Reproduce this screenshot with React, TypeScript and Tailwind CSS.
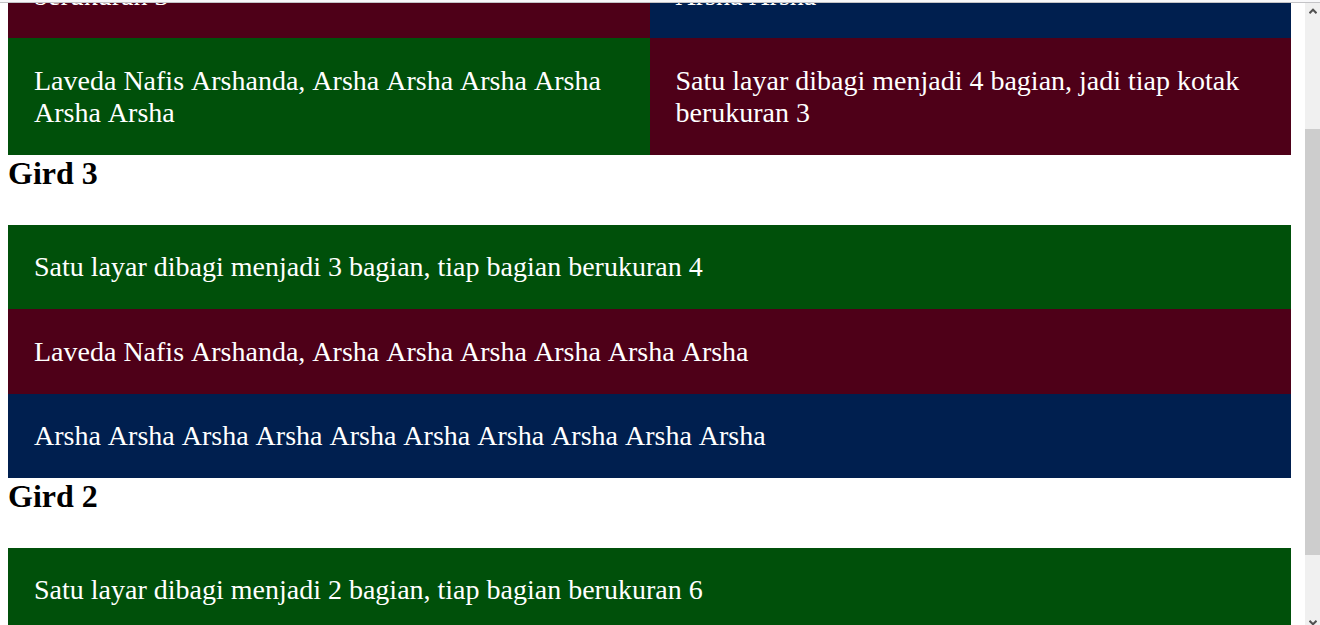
import type { ReactNode } from "react";

const tones = {
  green: "bg-[#00500a]",
  maroon: "bg-[#4e0018]",
  navy: "bg-[#001f4f]",
};

type Cell = { tone: keyof typeof tones; text: string };

const quarters: Cell[] = [
  { tone: "maroon", text: "Satu layar dibagi menjadi 4 bagian, jadi tiap kotak berukuran 3" },
  { tone: "navy", text: "Arsha Arsha Arsha Arsha Arsha Arsha Arsha Arsha Arsha Arsha" },
  { tone: "green", text: "Laveda Nafis Arshanda, Arsha Arsha Arsha Arsha Arsha Arsha" },
  { tone: "maroon", text: "Satu layar dibagi menjadi 4 bagian, jadi tiap kotak berukuran 3" },
];

const thirds: Cell[] = [
  { tone: "green", text: "Satu layar dibagi menjadi 3 bagian, tiap bagian berukuran 4" },
  { tone: "maroon", text: "Laveda Nafis Arshanda, Arsha Arsha Arsha Arsha Arsha Arsha" },
  { tone: "navy", text: "Arsha Arsha Arsha Arsha Arsha Arsha Arsha Arsha Arsha Arsha" },
];

const halves: Cell[] = [
  { tone: "green", text: "Satu layar dibagi menjadi 2 bagian, tiap bagian berukuran 6" },
];

function Block({ tone, text }: Cell) {
  return (
    <div className={`${tones[tone]} flex items-end p-[26px] text-[28px] leading-8 text-white`}>
      <p>{text}</p>
    </div>
  );
}

function Heading({ children }: { children: ReactNode }) {
  return <h1 className="pb-[33px] text-[32px] leading-[37px] font-bold text-black">{children}</h1>;
}

function Chevron({ down = false }: { down?: boolean }) {
  return (
    <svg viewBox="0 0 8 6" className="h-[6px] w-[8px]" fill="none" stroke="#505050" strokeWidth="2">
      <path d={down ? "M0.5 0.8 4 4.3 7.5 0.8" : "M0.5 5.2 4 1.7 7.5 5.2"} />
    </svg>
  );
}

export default function App() {
  return (
    <div className="flex h-screen flex-col overflow-hidden bg-white font-['Liberation_Serif','Times_New_Roman',serif] [font-kerning:none]">
      <div className="h-[3px] shrink-0 border-b border-[#c3c3c6] bg-[#f8f8fa]" />
      <div className="flex min-h-0 flex-1">
        <main className="flex min-w-0 flex-1 flex-col overflow-hidden pr-[14px] pl-2">
          <section className="-mt-[82px] grid shrink-0 auto-rows-[117px] grid-cols-2">
            {quarters.map((cell, i) => (
              <Block key={i} {...cell} />
            ))}
          </section>
          <Heading>Gird 3</Heading>
          <section className="grid min-h-[253px] shrink-0">
            {thirds.map((cell, i) => (
              <Block key={i} {...cell} />
            ))}
          </section>
          <Heading>Gird 2</Heading>
          <section className="grid shrink-0">
            {halves.map((cell, i) => (
              <Block key={i} {...cell} />
            ))}
          </section>
        </main>
        <div aria-hidden="true" className="flex w-[15px] shrink-0 flex-col items-center bg-[#f0f0f0]">
          <div className="flex h-4 items-center">
            <Chevron />
          </div>
          <div className="flex w-full flex-1 flex-col">
            <div className="flex-[110]" />
            <div className="flex-[426] bg-[#cdcdcd]" />
            <div className="flex-[65]" />
          </div>
          <div className="flex h-[5px] items-start">
            <Chevron down />
          </div>
        </div>
      </div>
    </div>
  );
}
